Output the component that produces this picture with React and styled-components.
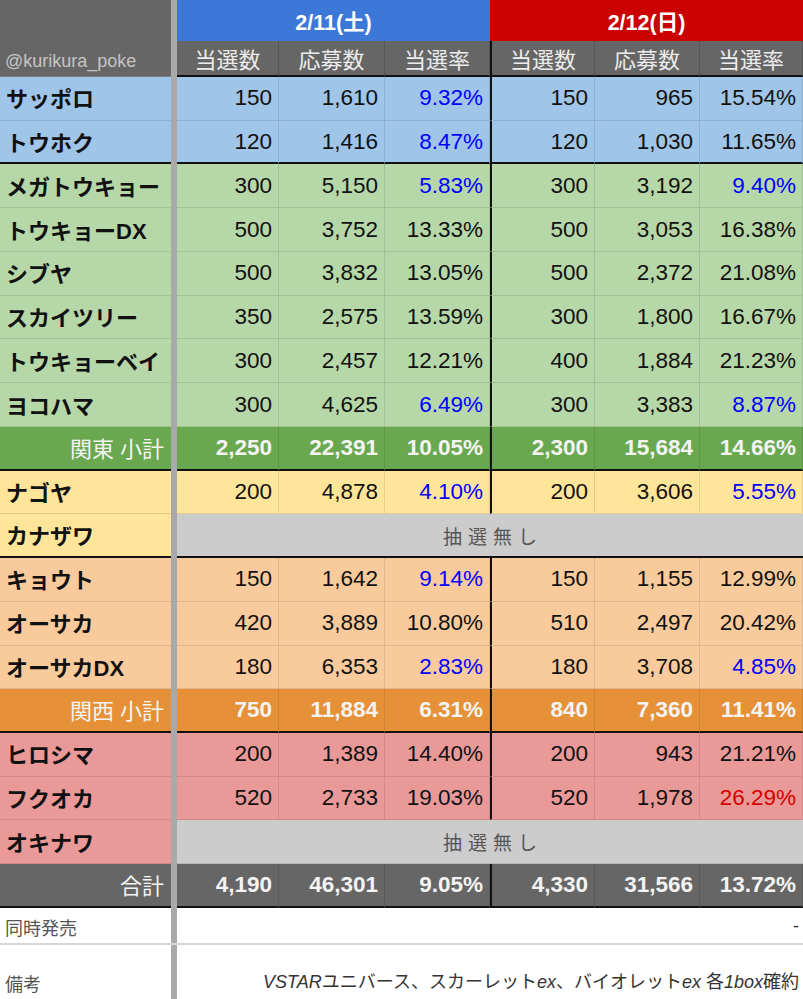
import React from "react";
import styled, { createGlobalStyle } from "styled-components";

const COLS = "171px 6px 102px 106px 105px 105px 105px 103px";
const ROW_H = 43.74;

const GlobalStyle = createGlobalStyle`
* { box-sizing: border-box; }
body {
    margin: 0;
    background: #fff;
    font-family: "Liberation Sans", "Noto Sans CJK JP", sans-serif;
}
`

const Page = styled.div`
width: 803px;
height: 999px;
overflow: hidden;
display: flex;
flex-flow: column;
`

const Divider = styled.div`
background: #a9a9a9;
grid-row: ${p => p.$rows || "auto"};
grid-column: 2;
`

const HeaderGrid = styled.div`
display: grid;
grid-template-columns: ${COLS};
grid-template-rows: 41px 36px;
`

const Corner = styled.div`
grid-row: 1 / 3;
grid-column: 1;
background: #666666;
display: flex;
align-items: flex-end;
padding: 0 0 4px 5px;
color: #c4c4c4;
font-size: 18px;
border-bottom: 1px solid #7d7d7d;
`

const DateCell = styled.div`
grid-row: 1;
grid-column: ${p => p.$col};
background: ${p => p.$bg};
color: #fff;
font-weight: bold;
font-size: 21.5px;
display: flex;
align-items: center;
justify-content: center;
padding-bottom: 1px;
`

const HeadCell = styled.div`
grid-row: 2;
background: #666666;
color: #ececec;
font-size: 22px;
display: flex;
align-items: center;
justify-content: center;
border-right: 1px solid #555;
border-bottom: 2px solid #111;
border-left: ${p => p.$split ? "2px solid #111" : "none"};
`

const Row = styled.div`
display: grid;
grid-template-columns: ${COLS};
height: ${ROW_H}px;
background: ${p => p.$bg};
color: ${p => p.$fg || "#111"};
& > *:not(${Divider}) {
    border-bottom: ${p => p.$end ? "2px solid #111" : "1px solid rgba(0,0,0,0.1)"};
}
`

const Name = styled.div`
display: flex;
align-items: center;
justify-content: ${p => p.$right ? "flex-end" : "flex-start"};
padding: ${p => p.$right ? "0 7px 2px 0" : "0 0 2px 6px"};
font-size: 22px;
font-weight: ${p => p.$right ? "normal" : "bold"};
white-space: nowrap;
`

const Num = styled.div`
display: flex;
align-items: center;
justify-content: flex-end;
padding-right: 6px;
font-size: 22.5px;
font-weight: ${p => p.$bold ? "bold" : "normal"};
color: ${p => p.$color || "inherit"};
border-right: 1px solid rgba(0,0,0,0.1);
border-left: ${p => p.$split ? "2px solid #111" : "none"};
`

const NoDraw = styled.div`
grid-column: 3 / -1;
background: #cccccc;
color: #555;
font-size: 19px;
letter-spacing: 6px;
display: flex;
align-items: center;
justify-content: center;
padding-left: 6px;
`

const NoteRow = styled.div`
display: grid;
grid-template-columns: 171px 6px 1fr;
height: ${p => p.$h}px;
border-bottom: ${p => p.$line ? "2px solid #d6d6d6" : "none"};
`

const NoteLabel = styled.div`
display: flex;
align-items: flex-end;
padding: 0 0 3px 5px;
font-size: 18px;
color: #555;
`

const NoteText = styled.div`
display: flex;
align-items: flex-end;
justify-content: flex-end;
padding: 0 4px 6px 0;
font-size: 18px;
color: #333;
white-space: nowrap;
& i { font-style: italic; }
`

const HEAD = ["当選数", "応募数", "当選率", "当選数", "応募数", "当選率"];

const rows = [
    { name: "サッポロ", bg: "#9fc5e8", v: ["150", "1,610", "9.32%", "150", "965", "15.54%"] },
    { name: "トウホク", bg: "#9fc5e8", v: ["120", "1,416", "8.47%", "120", "1,030", "11.65%"], end: true },
    { name: "メガトウキョー", bg: "#b6d7a8", v: ["300", "5,150", "5.83%", "300", "3,192", "9.40%"] },
    { name: "トウキョーDX", bg: "#b6d7a8", v: ["500", "3,752", "13.33%", "500", "3,053", "16.38%"] },
    { name: "シブヤ", bg: "#b6d7a8", v: ["500", "3,832", "13.05%", "500", "2,372", "21.08%"] },
    { name: "スカイツリー", bg: "#b6d7a8", v: ["350", "2,575", "13.59%", "300", "1,800", "16.67%"] },
    { name: "トウキョーベイ", bg: "#b6d7a8", v: ["300", "2,457", "12.21%", "400", "1,884", "21.23%"] },
    { name: "ヨコハマ", bg: "#b6d7a8", v: ["300", "4,625", "6.49%", "300", "3,383", "8.87%"] },
    { name: "関東 小計", bg: "#6aa84f", v: ["2,250", "22,391", "10.05%", "2,300", "15,684", "14.66%"], sum: true, end: true },
    { name: "ナゴヤ", bg: "#ffe599", v: ["200", "4,878", "4.10%", "200", "3,606", "5.55%"] },
    { name: "カナザワ", bg: "#ffe599", none: true, end: true },
    { name: "キョウト", bg: "#f9cb9c", v: ["150", "1,642", "9.14%", "150", "1,155", "12.99%"] },
    { name: "オーサカ", bg: "#f9cb9c", v: ["420", "3,889", "10.80%", "510", "2,497", "20.42%"] },
    { name: "オーサカDX", bg: "#f9cb9c", v: ["180", "6,353", "2.83%", "180", "3,708", "4.85%"] },
    { name: "関西 小計", bg: "#e69138", v: ["750", "11,884", "6.31%", "840", "7,360", "11.41%"], sum: true, end: true },
    { name: "ヒロシマ", bg: "#ea9999", v: ["200", "1,389", "14.40%", "200", "943", "21.21%"] },
    { name: "フクオカ", bg: "#ea9999", v: ["520", "2,733", "19.03%", "520", "1,978", "26.29%"] },
    { name: "オキナワ", bg: "#ea9999", none: true },
    { name: "合計", bg: "#666666", v: ["4,190", "46,301", "9.05%", "4,330", "31,566", "13.72%"], sum: true, end: true },
];

// rate colouring like the sheet: low rates blue, very high red
const rateColor = (val, i) => {
    if (i % 3 !== 2) return null;
    const n = parseFloat(val);
    if (n < 10) return "#0000ff";
    if (n > 25) return "#d40000";
    return null;
}

const DataRow = ({ r }) => (
    <Row $bg={r.bg} $end={r.end} $fg={r.sum ? "#f4f4f4" : "#111"}>
        <Name $right={r.sum}>{r.name}</Name>
        <Divider />
        {r.none
            ? <NoDraw>抽選無し</NoDraw>
            : r.v.map((val, i) => (
                <Num key={i} $split={i === 3} $bold={r.sum} $color={r.sum ? null : rateColor(val, i)}>{val}</Num>
            ))}
    </Row>
)

export default function App() {
    return (
        <Page>
            <GlobalStyle />
            <HeaderGrid>
                <Corner>@kurikura_poke</Corner>
                <Divider $rows="1 / 3" />
                <DateCell $col="3 / 6" $bg="#3c78d8">2/11(土)</DateCell>
                <DateCell $col="6 / 9" $bg="#cc0000">2/12(日)</DateCell>
                {HEAD.map((h, i) => <HeadCell key={i} $split={i === 3}>{h}</HeadCell>)}
            </HeaderGrid>
            {rows.map(r => <DataRow key={r.name} r={r} />)}
            <NoteRow $h={37} $line>
                <NoteLabel>同時発売</NoteLabel>
                <Divider />
                <NoteText>-</NoteText>
            </NoteRow>
            <NoteRow $h={54}>
                <NoteLabel>備考</NoteLabel>
                <Divider />
                <NoteText><i>VSTAR</i>ユニバース、スカーレット<i>ex</i>、バイオレット<i>ex</i>&nbsp;各<i>1box</i>確約</NoteText>
            </NoteRow>
        </Page>
    )
}
